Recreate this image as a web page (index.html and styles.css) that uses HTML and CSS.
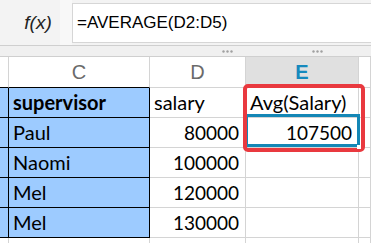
FILE: index.html
```html
<!DOCTYPE html>
<html lang="en">
<head>
    <meta charset="UTF-8">
    <title>Sheet</title>
    <link rel="stylesheet" href="styles.css">
</head>
<body>

    <div class="formula-bar">
        <div class="fx">f(x)</div>
        <div class="fx-gap"></div>
        <div class="formula">=AVERAGE(D2:D5)</div>
    </div>

    <div class="splitter">
        <svg class="grip" width="11" height="3" viewBox="0 0 11 3"><circle cx="1.5" cy="1.5" r="1.2"/><circle cx="5.5" cy="1.5" r="1.2"/><circle cx="9.5" cy="1.5" r="1.2"/></svg>
        <svg class="grip" width="11" height="3" viewBox="0 0 11 3"><circle cx="1.5" cy="1.5" r="1.2"/><circle cx="5.5" cy="1.5" r="1.2"/><circle cx="9.5" cy="1.5" r="1.2"/></svg>
    </div>

    <div class="sheet">
        <div class="head stub"></div>
        <div class="head col-c">C</div>
        <div class="head">D</div>
        <div class="head active">E</div>
        <div class="head"></div>

        <div class="cell stub marked"></div>
        <div class="cell marked bold">supervisor</div>
        <div class="cell">salary</div>
        <div class="cell">Avg(Salary)</div>
        <div class="cell"></div>

        <div class="cell stub marked"></div>
        <div class="cell marked">Paul</div>
        <div class="cell num">80000</div>
        <div class="cell num selected">107500</div>
        <div class="cell"></div>

        <div class="cell stub marked"></div>
        <div class="cell marked">Naomi</div>
        <div class="cell num">100000</div>
        <div class="cell"></div>
        <div class="cell"></div>

        <div class="cell stub marked"></div>
        <div class="cell marked">Mel</div>
        <div class="cell num">120000</div>
        <div class="cell"></div>
        <div class="cell"></div>

        <div class="cell stub marked"></div>
        <div class="cell marked">Mel</div>
        <div class="cell num">130000</div>
        <div class="cell"></div>
        <div class="cell"></div>

        <div class="cell stub"></div>
        <div class="cell"></div>
        <div class="cell"></div>
        <div class="cell"></div>
        <div class="cell"></div>

        <div class="callout"></div>
    </div>

</body>
</html>
```

FILE: styles.css
```css
body {
    margin: 0;
    width: 371px;
    height: 243px;
    overflow: hidden;
    background-color: #fff;
    font-family: "Liberation Sans", Arial, sans-serif;
}

.formula-bar {
    display: flex;
    height: 45px;
    border-bottom: 1px solid #cfcfcf;
    background-color: #f3f3f3;
}

.fx {
    width: 60px;
    display: flex;
    align-items: center;
    justify-content: center;
    padding-left: 16px;
    box-sizing: border-box;
    font-style: italic;
    font-size: 19px;
    color: #222;
}

.fx-gap {
    width: 12px;
    background-color: #f8f8f8;
}

.formula {
    flex: 1;
    margin-top: 3px;
    height: 40px;
    background-color: #fff;
    border: 1px solid #d6d6d6;
    border-right: none;
    box-sizing: border-box;
    display: flex;
    align-items: center;
    padding-left: 4px;
    font-size: 17px;
    color: #000;
}

.splitter {
    height: 10px;
    border-bottom: 1px solid #cfcfcf;
    background-color: #f0f0f0;
    display: flex;
    align-items: center;
    padding-left: 222px;
    gap: 79px;
}

.grip {
    fill: #a0a0a0;
}

.sheet {
    position: relative;
    height: 197px;
    overflow: hidden;
    display: grid;
    grid-template-columns: 9px 141px 96px 113px 1fr;
    grid-template-rows: 31px repeat(6, 30px);
}

.head {
    border-right: 1px solid #d4d4d4;
    border-bottom: 1px solid #d4d4d4;
    display: flex;
    align-items: center;
    justify-content: center;
    font-size: 20px;
    color: #6a6a6a;
}

.head.col-c,
.head.stub {
    border-bottom-color: #000;
}

.head.active {
    background-color: #e0e0e0;
    color: #1689bd;
    font-weight: bold;
}

.cell {
    position: relative;
    border-right: 1px solid #d4d4d4;
    border-bottom: 1px solid #d4d4d4;
    display: flex;
    align-items: flex-end;
    padding: 0 4px 3px 4px;
    font-family: Lato, "Liberation Sans", sans-serif;
    font-size: 20px;
    color: #000;
    white-space: nowrap;
    overflow: hidden;
}

.cell.stub {
    padding: 0;
}

.cell.marked {
    background-color: #9dcbff;
    border-right-color: #000;
    border-bottom-color: #000;
}

.cell.bold {
    font-weight: bold;
}

.cell.num {
    justify-content: flex-end;
    padding-right: 6px;
    font-size: 19px;
}

.cell.selected {
    overflow: visible;
}

.cell.selected::after {
    content: "";
    position: absolute;
    top: -4px;
    left: -1px;
    right: -2px;
    bottom: 0;
    border: 3px solid #1487b6;
}

.cell.selected::before {
    content: "";
    position: absolute;
    right: -3px;
    bottom: -2px;
    width: 4px;
    height: 4px;
    background-color: #fff;
    z-index: 1;
}

.callout {
    position: absolute;
    left: 243px;
    top: 27px;
    width: 122px;
    height: 68px;
    box-sizing: border-box;
    border: 4px solid #e9393f;
    border-radius: 5px;
}
```
